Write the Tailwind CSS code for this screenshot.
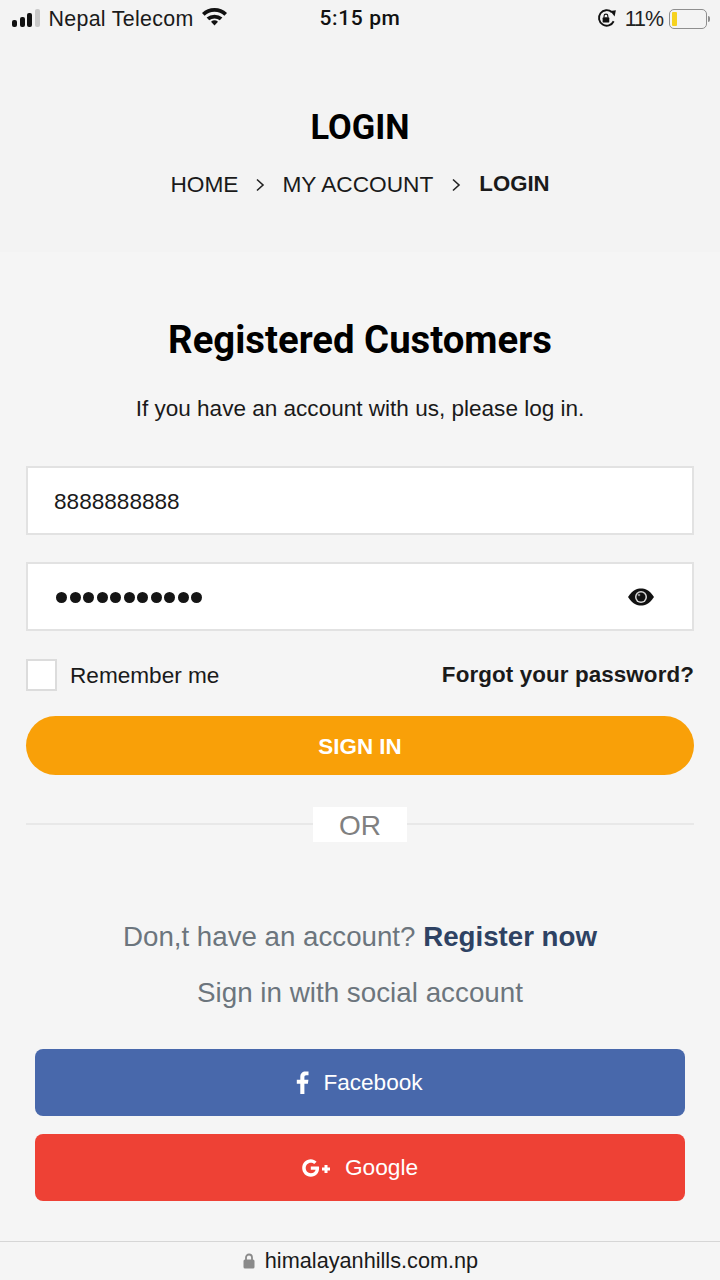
<!DOCTYPE html>
<html lang="en">
<head>
    <meta charset="UTF-8">
    <meta name="viewport" content="width=device-width, initial-scale=1.0">
    <title>Login</title>
    <script src="https://cdn.jsdelivr.net/npm/@tailwindcss/browser@4"></script>
</head>
<body class="bg-[#f5f5f5] font-['Liberation_Sans',Arial,sans-serif] text-[#1a1a1a]">
<div class="w-[720px] h-[1280px] overflow-hidden flex flex-col">
    <!-- status bar -->
    <div class="h-[36px] shrink-0 relative flex items-center justify-between pl-[12px] pr-[10px] text-[21px] pt-[2px] bg-[#f3f3f3]">
        <div class="flex items-center">
            <div class="flex items-end gap-[2.500px] h-[18px] mt-[-1px]">
                <span class="w-[5px] h-[7px] rounded-[2px] bg-[#111]"></span>
                <span class="w-[5px] h-[10px] rounded-[2px] bg-[#111]"></span>
                <span class="w-[5px] h-[14px] rounded-[2px] bg-[#111]"></span>
                <span class="w-[5px] h-[18px] rounded-[2px] bg-[#c9c9c9]"></span>
            </div>
            <span class="ml-[9px] text-[21.400px] tracking-[0.3px] text-[#1a1a1a]">Nepal Telecom</span>
            <svg class="ml-[7px] mt-[-5px]" width="27" height="20" viewBox="0 0 27 20"><path d="M1 7 A18 18 0 0 1 26 7 L23.4 9.8 A14.4 14.4 0 0 0 3.6 9.8 Z M5.6 11.6 A12 12 0 0 1 21.4 11.6 L18.8 14.3 A8.4 8.4 0 0 0 8.2 14.3 Z M10 15.8 A5.4 5.4 0 0 1 17 15.8 L13.5 19.6 Z" fill="#111"/></svg>
        </div>
        <span class="absolute left-0 w-[720px] text-center font-['Roboto',sans-serif] font-medium tracking-[0.6px] text-[#111]">5:15 pm</span>
        <div class="flex items-center">
            <svg width="21" height="21" viewBox="0 0 19 19"><path d="M16 12 A7 7 0 1 1 14.400 3.800" fill="none" stroke="#111" stroke-width="1.700"/><path d="M13 2.800 L18 2 L16.800 7.600 Z" fill="#111"/><rect x="6" y="8.400" width="6" height="4.800" rx="0.800" fill="#111"/><path d="M7.300 8.600 V7.200 a1.700 1.700 0 0 1 3.400 0 V8.600" fill="none" stroke="#111" stroke-width="1"/></svg>
            <span class="ml-[8px] text-[21.400px] tracking-[-1px] text-[#222]">11%</span>
            <div class="ml-[6px] w-[38px] h-[20px] rounded-[5px] border-[1.5px] border-[#8e8e8e] p-[2px]">
                <div class="w-[5px] h-full rounded-[1px] bg-[#f6d21f]"></div>
            </div>
            <div class="ml-[1px] w-[2px] h-[6px] rounded-r-[2px] bg-[#8e8e8e]"></div>
        </div>
    </div>

    <!-- breadcrumb -->
    <div class="h-[216px] shrink-0 flex flex-col items-center pt-[71px] bg-[#f3f3f3]">
        <h1 class="text-[34.400px] leading-[40px] font-bold text-black font-['Roboto',sans-serif]">LOGIN</h1>
        <div class="mt-[23px] flex items-center text-[22.700px] leading-[28px] text-[#1a1a1a]">
            <span class="mt-[-1px]">HOME</span>
            <svg class="mx-[17px] mt-[2px]" width="10" height="14" viewBox="0 0 10 14"><path d="M2 1.5 L8 7 L2 12.5" fill="none" stroke="#222" stroke-width="1.6"/></svg>
            <span class="mt-[-1px]">MY ACCOUNT</span>
            <svg class="mx-[18px] mt-[2px]" width="10" height="14" viewBox="0 0 10 14"><path d="M2 1.5 L8 7 L2 12.5" fill="none" stroke="#222" stroke-width="1.6"/></svg>
            <span class="font-bold text-[22.200px]">LOGIN</span>
        </div>
    </div>

    <!-- login form -->
    <div class="px-[26px] pt-[66px] flex flex-col">
        <h2 class="text-center text-[38.300px] leading-[44px] font-bold text-black font-['Roboto',sans-serif]">Registered Customers</h2>
        <p class="mt-[33px] text-center text-[22.550px] leading-[28px]">If you have an account with us, please log in.</p>
        <div class="mt-[43px] h-[69px] bg-white border-2 border-[#e2e2e2] flex items-center pl-[26px] pt-[2px] text-[22.600px]">8888888888</div>
        <div class="mt-[27px] h-[69px] bg-white border-2 border-[#e2e2e2] flex items-center justify-between pl-[28px] pr-[38px] pt-[1px]">
            <div class="flex gap-[2.500px]">
                <span class="w-[11px] h-[11px] rounded-full bg-[#151515]"></span>
                <span class="w-[11px] h-[11px] rounded-full bg-[#151515]"></span>
                <span class="w-[11px] h-[11px] rounded-full bg-[#151515]"></span>
                <span class="w-[11px] h-[11px] rounded-full bg-[#151515]"></span>
                <span class="w-[11px] h-[11px] rounded-full bg-[#151515]"></span>
                <span class="w-[11px] h-[11px] rounded-full bg-[#151515]"></span>
                <span class="w-[11px] h-[11px] rounded-full bg-[#151515]"></span>
                <span class="w-[11px] h-[11px] rounded-full bg-[#151515]"></span>
                <span class="w-[11px] h-[11px] rounded-full bg-[#151515]"></span>
                <span class="w-[11px] h-[11px] rounded-full bg-[#151515]"></span>
                <span class="w-[11px] h-[11px] rounded-full bg-[#151515]"></span>
            </div>
            <svg width="26" height="18" viewBox="0 0 26 18"><path d="M0 9 C5 1.500 9 0.500 13 0.500 C17 0.500 21 1.500 26 9 C21 16.500 17 17.500 13 17.500 C9 17.500 5 16.500 0 9 Z" fill="#111"/><circle cx="13" cy="9" r="6" fill="#d8d8d8"/><circle cx="13" cy="9" r="4.500" fill="#111"/><circle cx="11" cy="7" r="1.300" fill="#888"/></svg>
        </div>
        <div class="mt-[27px] flex items-center justify-between h-[34px]">
            <label class="flex items-center">
                <span class="w-[31px] h-[32px] bg-white border-2 border-[#dcdcdc]"></span>
                <span class="ml-[13px] pt-[2px] text-[22.600px]">Remember me</span>
            </label>
            <a class="text-[22.400px] font-bold tracking-[0.1px] mt-[-1px]">Forgot your password?</a>
        </div>
        <button class="mt-[24px] h-[59px] pt-[2px] rounded-full bg-[#f9a008] text-white font-bold text-[22.400px]">SIGN IN</button>
        <div class="mt-[32px] relative h-[35px] flex items-center justify-center">
            <div class="absolute inset-x-0 top-[16px] h-[2px] bg-[#e8e8e8]"></div>
            <div class="relative w-[94px] h-[35px] pt-[2px] bg-white flex items-center justify-center text-[28px] text-[#808080]">OR</div>
        </div>
        <p class="mt-[77px] text-center text-[27.700px] leading-[36px] text-[#6c757d]">Don,t have an account? <a class="font-bold text-[#2e4263]">Register now</a></p>
        <p class="mt-[20px] text-center text-[27.800px] leading-[36px] text-[#6c757d]">Sign in with social account</p>
        <div class="mt-[38px] px-[9px] flex flex-col gap-[18px]">
            <a class="h-[67px] rounded-[8px] bg-[#4868ab] text-white text-[22.600px] flex items-center justify-center">
                <svg class="mr-[14px] ml-[-1px]" width="13" height="23" viewBox="0 0 13 23"><path d="M8.400 23 V12.700 H11.900 L12.400 8.700 H8.400 V6.200 C8.400 5 8.800 4.200 10.400 4.200 H12.500 V0.600 C12.100 0.500 10.900 0.400 9.500 0.400 C6.400 0.400 4.300 2.300 4.300 5.800 V8.700 H0.800 V12.700 H4.300 V23 Z" fill="#fff"/></svg>
                Facebook
            </a>
            <a class="h-[67px] rounded-[8px] bg-[#ee4135] text-white text-[22.700px] flex items-center justify-center">
                <svg class="mr-[14px]" width="29" height="18" viewBox="0 0 29 18"><path d="M8.800 7.500 V10.700 H13.600 C13.300 12.500 11.400 14.200 8.800 14.200 C5.900 14.200 3.700 11.900 3.700 9 C3.700 6.100 5.900 3.800 8.800 3.800 C10.200 3.800 11.300 4.300 12.200 5.100 L14.600 2.700 C13 1.200 11.100 0.300 8.800 0.300 C4 0.300 0.200 4.200 0.200 9 C0.200 13.800 4 17.700 8.800 17.700 C13.900 17.700 17.100 14.200 17.100 9 C17.100 8.500 17 8 16.900 7.500 Z M22.500 6 V8.500 H20 V11.500 H22.500 V14 H25.500 V11.500 H28 V8.500 H25.500 V6 Z" fill="#fff"/></svg>
                Google
            </a>
        </div>
    </div>

    <!-- safari url bar -->
    <div class="mt-auto h-[39px] shrink-0 border-t border-[#d6d6d6] flex items-center justify-center pl-[1px] text-[21.700px] text-[#1a1a1a]">
        <svg class="mr-[10px]" width="12" height="16" viewBox="0 0 12 16"><path d="M3 7 V4.500 a3 3 0 0 1 6 0 V7" fill="none" stroke="#8a8a8a" stroke-width="1.800"/><rect x="0.500" y="6.500" width="11" height="9" rx="1.500" fill="#8a8a8a"/></svg>
        himalayanhills.com.np
    </div>
</div>
</body>
</html>
